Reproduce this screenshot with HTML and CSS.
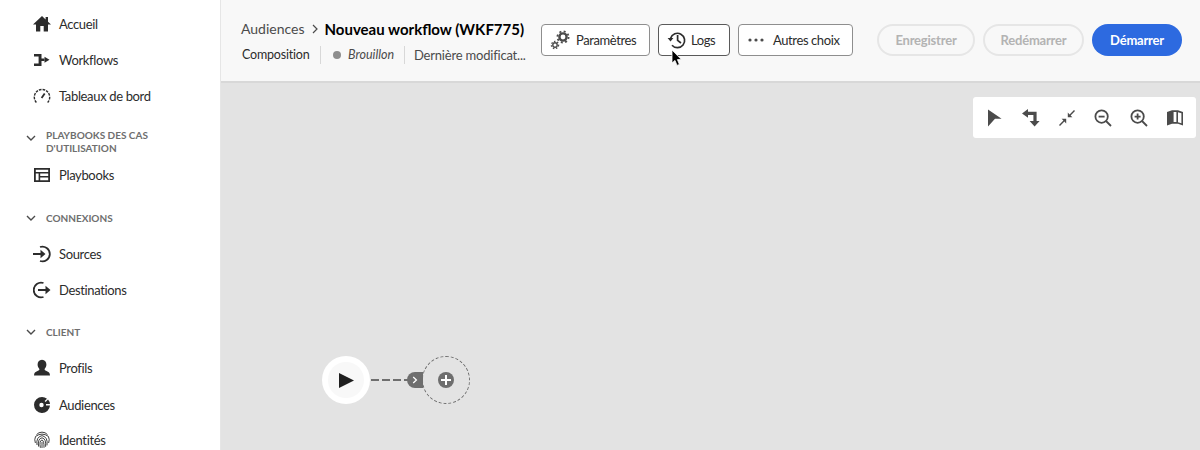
FILE: index.html
```html
<!DOCTYPE html>
<html lang="fr">
<head>
  <meta charset="UTF-8">
  <title>Nouveau workflow</title>
  <link rel="stylesheet" href="styles.css">
</head>
<body>
  <nav class="sidebar">
    <a class="nav-item">
      <svg class="nav-icon" viewBox="0 0 18 18"><path d="M9 1 L0 9.5 H3 V16.5 H7.3 V11 H10.7 V16.5 H15 V9.5 H18 L15 6.7 V2 H12.6 V4.4 Z"/></svg>
      Accueil
    </a>
    <a class="nav-item">
      <svg class="nav-icon" viewBox="0 0 18 18"><path d="M1 3 H8.5 V7.6 H11.5 V10 H8.5 V15 H1 V12.6 H5.6 V5.4 H1 Z"/><path d="M11.5 5.8 L16.5 8.8 L11.5 11.8 Z"/></svg>
      Workflows
    </a>
    <a class="nav-item">
      <svg class="nav-icon nav-icon-line" viewBox="0 0 18 18"><path d="M3.4 15.5 A7.7 7.7 0 1 1 14.6 15.5" stroke-dasharray="2.6 1"/><path d="M8.6 11 L11.7 6.4" stroke-width="1.8"/></svg>
      Tableaux de bord
    </a>

    <section class="group group-first">
      <div class="group-head">
        <svg class="chevron" viewBox="0 0 10 6"><path d="M1 1 L5 5 L9 1"/></svg>
        <span>Playbooks des cas d'utilisation</span>
      </div>
      <a class="nav-item">
        <svg class="nav-icon" viewBox="0 0 18 18"><path fill-rule="evenodd" d="M1 2 H17 V16 H1 Z M2.8 3.8 V6 H15.2 V3.8 Z M2.8 7.6 V14.2 H5.6 V7.6 Z M7.2 7.6 V10 H15.2 V7.6 Z M7.2 11.6 V14.2 H15.2 V11.6 Z"/></svg>
        Playbooks
      </a>
    </section>

    <section class="group">
      <div class="group-head">
        <svg class="chevron" viewBox="0 0 10 6"><path d="M1 1 L5 5 L9 1"/></svg>
        <span>Connexions</span>
      </div>
      <a class="nav-item">
        <svg class="nav-icon" viewBox="0 0 18 18"><path d="M7 2 A7.4 7.4 0 1 1 7 16" fill="none" stroke="#2c2c2c" stroke-width="1.8"/><path d="M0 8 H7.5 V4.8 L12.5 9 L7.5 13.2 V10 H0 Z"/></svg>
        Sources
      </a>
      <a class="nav-item">
        <svg class="nav-icon" viewBox="0 0 18 18"><path d="M10.5 2 A7.4 7.4 0 1 0 10.5 16" fill="none" stroke="#2c2c2c" stroke-width="1.8"/><path d="M5 8 H12.5 V4.8 L17.5 9 L12.5 13.2 V10 H5 Z"/></svg>
        Destinations
      </a>
    </section>

    <section class="group group-client">
      <div class="group-head">
        <svg class="chevron" viewBox="0 0 10 6"><path d="M1 1 L5 5 L9 1"/></svg>
        <span>Client</span>
      </div>
      <a class="nav-item nav-item-profile">
        <svg class="nav-icon" viewBox="0 0 18 18"><path d="M9 .8 C12 .8 13.4 3 13.4 5.6 C13.4 7.6 12.6 9 11.6 10 C11.6 11 12 11.5 13.5 12 C15.6 12.8 17 13.6 17 16.5 H1 C1 13.6 2.4 12.8 4.5 12 C6 11.5 6.4 11 6.4 10 C5.4 9 4.6 7.6 4.6 5.6 C4.6 3 6 .8 9 .8 Z"/></svg>
        Profils
      </a>
      <a class="nav-item nav-item-audiences">
        <svg class="nav-icon" viewBox="0 0 18 18"><path fill-rule="evenodd" d="M9 1 A8 8 0 1 0 17 9.5 H13 V8 H17 A8 8 0 0 0 15 3.6 L12.6 6 L11.6 5 L14 2.7 A8 8 0 0 0 9 1 Z M8.5 6.8 A2.2 2.2 0 1 0 8.5 11.2 A2.2 2.2 0 1 0 8.5 6.8 Z"/></svg>
        Audiences
      </a>
      <a class="nav-item nav-item-identity">
        <svg class="nav-icon nav-icon-line nav-icon-thin" viewBox="0 0 18 18"><path d="M3.5 3.6 A7.4 7.4 0 0 1 14.5 3.6"/><path d="M2.4 12 A8 8 0 0 1 2.6 5.4 Q9 .8 15.4 5.4 A8 8 0 0 1 15.6 12"/><path d="M4 14 Q2.8 6 9 4.6 Q15.2 6 14 14.4"/><path d="M5.6 15.6 Q4.4 7.6 9 6.8 Q13.4 7.6 12.6 15.8"/><path d="M7.4 16.8 Q6 9.6 9 9 Q11.2 9.6 11 16.8"/><path d="M9 11 V17"/></svg>
        Identités
      </a>
    </section>
  </nav>

  <main class="main">
    <header class="topbar">
      <div class="title-block">
        <div class="crumbs">
          <span class="crumb">Audiences</span>
          <svg class="crumb-sep" viewBox="0 0 6 10"><path d="M1 1 L5 5 L1 9"/></svg>
          <h1 class="title">Nouveau workflow (WKF775)</h1>
        </div>
        <div class="meta">
          <span class="meta-tab">Composition</span>
          <span class="meta-status"><i class="dot"></i><em>Brouillon</em></span>
          <span class="meta-date">Dernière modificat...</span>
        </div>
      </div>

      <div class="actions">
        <button class="btn btn-params" type="button">
          <svg class="btn-icon" viewBox="0 0 20 20">
            <circle cx="13" cy="7" r="3.6" fill="none" stroke="#4b4b4b" stroke-width="2.4"/>
            <circle cx="13" cy="7" r="5.6" fill="none" stroke="#4b4b4b" stroke-width="1.8" stroke-dasharray="2 2.4"/>
            <circle cx="5" cy="15" r="2.2" fill="none" stroke="#4b4b4b" stroke-width="1.4"/>
            <circle cx="5" cy="15" r="3.6" fill="none" stroke="#4b4b4b" stroke-width="1.3" stroke-dasharray="1.5 1.6"/>
          </svg>
          Paramètres
        </button>
        <button class="btn btn-logs" type="button">
          <svg class="btn-icon" viewBox="0 0 20 20">
            <path d="M3.6 8.2 A7.2 7.2 0 1 1 5 15.2" fill="none" stroke="#2c2c2c" stroke-width="1.7"/>
            <path d="M.6 8 L6.4 8 L3.5 11.6 Z" fill="#2c2c2c"/>
            <path d="M10.6 5 V10.4 L14 13" fill="none" stroke="#2c2c2c" stroke-width="1.7"/>
          </svg>
          Logs
        </button>
        <button class="btn btn-more" type="button">
          <svg class="btn-icon" viewBox="0 0 20 20"><circle cx="3" cy="10" r="1.6"/><circle cx="9" cy="10" r="1.6"/><circle cx="15" cy="10" r="1.6"/></svg>
          Autres choix
        </button>
      </div>

      <div class="actions actions-right">
        <button class="pill pill-save" type="button" disabled>Enregistrer</button>
        <button class="pill pill-restart" type="button" disabled>Redémarrer</button>
        <button class="pill pill-start" type="button">Démarrer</button>
      </div>
    </header>

    <div class="canvas">
      <div class="toolbar">
        <svg class="tool" viewBox="0 0 18 18"><path d="M2 .6 L15.6 9.8 H9 L2 17.4 Z"/></svg>
        <svg class="tool" viewBox="0 0 18 18"><path d="M0 4.4 L6 0 V2.8 H14.6 V12 H17.6 L12.6 17.6 L7.6 12 H11.4 V6 H6 V8.8 Z"/></svg>
        <svg class="tool" viewBox="0 0 18 18"><path d="M17 2 L16 1 L11.6 5.4 L9.8 3.6 V8.2 H14.4 L12.6 6.4 Z M1 16 L2 17 L6.4 12.6 L8.2 14.4 V9.8 H3.6 L5.4 11.6 Z"/></svg>
        <svg class="tool tool-line" viewBox="0 0 18 18"><circle cx="7.6" cy="7.6" r="6.2"/><path d="M12 12 L17 17"/><path d="M4.6 7.6 H10.6"/></svg>
        <svg class="tool tool-line" viewBox="0 0 18 18"><circle cx="7.6" cy="7.6" r="6.2"/><path d="M12 12 L17 17"/><path d="M4.6 7.6 H10.6 M7.6 4.6 V10.6"/></svg>
        <svg class="tool" viewBox="0 0 18 18"><path fill-rule="evenodd" d="M1 3 L6 1.2 L12 1.2 L17 3 V16.6 L12 14.8 L6 14.8 L1 16.6 Z M7.6 3 V13 H10.4 V3 Z M12 3.2 V13.2 L15.4 14.2 V4.2 Z"/></svg>
      </div>

      <div class="node-start">
        <span class="node-start-inner">
          <svg class="play" viewBox="0 0 14 14"><path d="M0 0 L14 7 L0 14 Z"/></svg>
        </span>
      </div>
      <div class="link"></div>
      <div class="port">
        <svg viewBox="0 0 6 8"><path d="M1.2 1 L4.4 4 L1.2 7"/></svg>
      </div>
      <div class="node-add">
        <span class="node-plus"></span>
      </div>
    </div>
  </main>

  <svg class="cursor" viewBox="0 0 12 18"><path d="M1 1 V14 L4 11.4 L6 16.4 L8.4 15.4 L6.4 10.6 H10.4 Z"/></svg>
</body>
</html>
```

FILE: styles.css
```css
* {
  box-sizing: border-box;
}

html, body {
  height: 100%;
}

body {
  display: flex;
  margin: 0;
  height: 450px;
  overflow: hidden;
  font-family: Lato, "Open Sans", Arial, sans-serif;
  font-size: 13px;
  color: #2c2c2c;
  background-color: #fff;
}

/* sidebar */
.sidebar {
  flex: 0 0 221px;
  height: 450px;
  padding-top: 6px;
  overflow: hidden;
  background-color: #fff;
  border-right: 1px solid #e6e6e6;
}

.nav-item {
  display: flex;
  align-items: center;
  gap: 8px;
  height: 36px;
  padding-left: 33px;
  letter-spacing: -0.35px;
  color: #2c2c2c;
}

.nav-item-profile {
  margin-top: 2px;
}

.nav-item-audiences {
  margin-top: 1px;
}

.nav-item-identity {
  margin-top: -1px;
}

.nav-icon {
  flex: 0 0 18px;
  width: 18px;
  height: 18px;
  fill: #2c2c2c;
}

.nav-icon-line {
  fill: none;
  stroke: #2c2c2c;
  stroke-width: 1.4;
}

.nav-icon-thin {
  stroke-width: 0.9;
}

.group {
  margin-top: 12px;
}

.group-first {
  margin-top: 15px;
}

.group-client {
  margin-top: 11px;
}

.group-head {
  display: flex;
  align-items: center;
  gap: 10px;
  min-height: 26px;
  margin-bottom: 5px;
  padding-left: 26px;
  padding-right: 50px;
  font-size: 10px;
  font-weight: 700;
  line-height: 13px;
  text-transform: uppercase;
  color: #6e6e6e;
}

.group-first .group-head {
  align-items: flex-start;
  margin-bottom: 2px;
}

.group-first .chevron {
  margin-top: 6px;
}

.chevron {
  flex: 0 0 10px;
  width: 10px;
  height: 6px;
  fill: none;
  stroke: #4b4b4b;
  stroke-width: 1.4;
}

/* header */
.main {
  flex: 1;
  display: flex;
  flex-direction: column;
  min-width: 0;
}

.topbar {
  flex: 0 0 83px;
  display: flex;
  align-items: center;
  padding-right: 18px;
  padding-bottom: 2px;
  background-color: #f8f8f8;
  border-bottom: 2px solid #d8d8d8;
}

.title-block {
  flex: 0 0 320px;
  padding-left: 20px;
}

.crumbs {
  display: flex;
  align-items: center;
  height: 26px;
}

.crumb {
  font-size: 14px;
  color: #4b4b4b;
}

.crumb-sep {
  width: 6px;
  height: 10px;
  margin: 0 7px 0 7px;
  fill: none;
  stroke: #4b4b4b;
  stroke-width: 1.2;
}

.title {
  margin: 0;
  font-size: 15px;
  font-weight: 700;
  color: #000;
}

.meta {
  display: flex;
  align-items: center;
  height: 18px;
  margin-top: 4px;
  white-space: nowrap;
}

.meta-tab {
  width: 80px;
  height: 18px;
  padding-left: 1px;
  line-height: 18px;
  font-size: 12.5px;
  letter-spacing: -0.2px;
  border-right: 1px solid #d8d8d8;
}

.meta-status {
  display: flex;
  align-items: center;
  width: 84px;
  height: 18px;
  padding-left: 12px;
  font-size: 12.5px;
  color: #4b4b4b;
  border-right: 1px solid #d8d8d8;
}

.dot {
  width: 8px;
  height: 8px;
  margin-right: 7px;
  border-radius: 50%;
  background-color: #8e8e8e;
}

.meta-date {
  padding-left: 9px;
  font-size: 13px;
  letter-spacing: -0.2px;
  color: #4b4b4b;
}

.actions {
  display: flex;
  align-items: center;
  gap: 8px;
}

.actions-right {
  margin-left: auto;
}

.btn {
  display: flex;
  align-items: center;
  height: 32px;
  padding: 0 0 0 8px;
  font: inherit;
  font-size: 13px;
  letter-spacing: -0.4px;
  color: #2c2c2c;
  background-color: #fff;
  border: 1px solid #8e8e8e;
  border-radius: 4px;
  white-space: nowrap;
}

.btn-params {
  width: 109px;
  gap: 6px;
}

.btn-logs {
  width: 72px;
  gap: 4px;
  border-color: #5a5a5a;
}

.btn-more {
  width: 115px;
  gap: 6px;
}

.btn-icon {
  width: 20px;
  height: 20px;
  fill: #4b4b4b;
}

.pill {
  height: 32px;
  padding: 0;
  font: inherit;
  font-size: 13px;
  font-weight: 700;
  letter-spacing: -0.2px;
  border-radius: 16px;
  white-space: nowrap;
}

.pill[disabled] {
  color: #b3b3b3;
  background-color: transparent;
  border: 2px solid #e6e6e6;
}

.pill-save {
  width: 98px;
}

.pill-restart {
  width: 101px;
}

.pill-start {
  width: 90px;
  color: #fff;
  background-color: #2d6ae0;
  border: none;
}

/* workflow canvas */
.canvas {
  position: relative;
  flex: 1;
  background-color: #e3e3e3;
}

.toolbar {
  position: absolute;
  top: 14px;
  right: 4px;
  display: flex;
  align-items: center;
  gap: 18px;
  width: 223px;
  height: 41px;
  padding-left: 13px;
  background-color: #fff;
  border-radius: 3px;
}

.tool {
  flex: 0 0 18px;
  width: 18px;
  height: 18px;
  fill: #4b4b4b;
}

.tool-line {
  fill: none;
  stroke: #4b4b4b;
  stroke-width: 1.8;
}

.node-start {
  position: absolute;
  left: 101px;
  top: 273px;
  display: flex;
  align-items: center;
  justify-content: center;
  width: 48px;
  height: 48px;
  border-radius: 50%;
  background-color: #fff;
}

.node-start-inner {
  display: flex;
  align-items: center;
  justify-content: center;
  width: 36px;
  height: 36px;
  border-radius: 50%;
  background-color: #f8f8f8;
}

.play {
  width: 15px;
  height: 15px;
  margin-left: 1px;
  fill: #1f1f1f;
}

.link {
  position: absolute;
  left: 150px;
  top: 296px;
  width: 37px;
  height: 2px;
  background-image: repeating-linear-gradient(to right, #6e6e6e 0 8px, transparent 8px 11px);
}

.port {
  position: absolute;
  left: 186px;
  top: 289px;
  display: flex;
  align-items: center;
  justify-content: center;
  width: 16px;
  height: 16px;
  border-radius: 8px 0 0 8px;
  background-color: #6e6e6e;
}

.port svg {
  width: 6px;
  height: 8px;
  fill: none;
  stroke: #fff;
  stroke-width: 1.3;
}

.node-add {
  position: absolute;
  left: 201px;
  top: 273px;
  display: flex;
  align-items: center;
  justify-content: center;
  width: 48px;
  height: 48px;
  border: 1px dashed #6e6e6e;
  border-radius: 50%;
}

.node-plus {
  position: relative;
  width: 16px;
  height: 16px;
  border-radius: 50%;
  background-color: #6e6e6e;
}

.node-plus::before,
.node-plus::after {
  content: "";
  position: absolute;
  background-color: #fff;
}

.node-plus::before {
  left: 3px;
  top: 7px;
  width: 10px;
  height: 2px;
}

.node-plus::after {
  left: 7px;
  top: 3px;
  width: 2px;
  height: 10px;
}

.cursor {
  position: absolute;
  left: 671px;
  top: 49px;
  width: 12px;
  height: 18px;
  fill: #000;
  stroke: #fff;
  stroke-width: 0.8;
}
```
